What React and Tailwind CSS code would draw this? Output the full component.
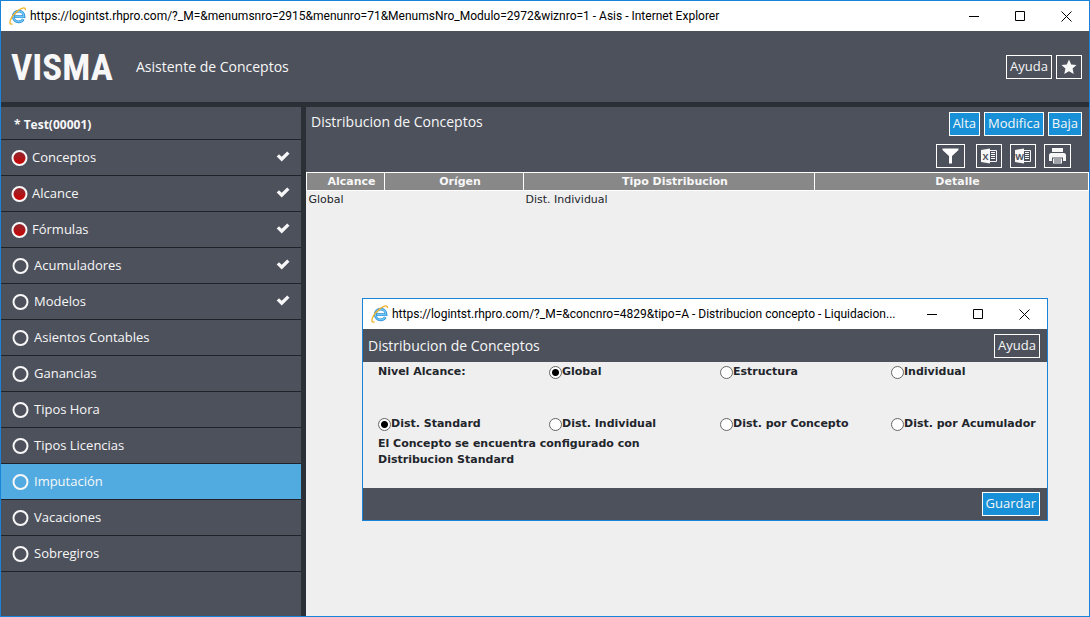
const steps = [
  { name: 'Conceptos', required: true, done: true },
  { name: 'Alcance', required: true, done: true },
  { name: 'Fórmulas', required: true, done: true },
  { name: 'Acumuladores', done: true },
  { name: 'Modelos', done: true },
  { name: 'Asientos Contables' },
  { name: 'Ganancias' },
  { name: 'Tipos Hora' },
  { name: 'Tipos Licencias' },
  { name: 'Imputación', active: true },
  { name: 'Vacaciones' },
  { name: 'Sobregiros' },
];

const niveles = ['Global', 'Estructura', 'Individual'];
const distribuciones = [
  'Dist. Standard',
  'Dist. Individual',
  'Dist. por Concepto',
  'Dist. por Acumulador',
];

const ExplorerIcon = () => (
  <svg width="18" height="18" viewBox="0 0 18 18" fill="none" className="shrink-0">
    <path
      d="M14.300 12.200c-.9 1.700-2.500 2.700-4.600 2.700-3.100 0-5.400-2.300-5.400-5.400s2.300-5.400 5.400-5.400 5.300 2.200 5.300 5.600H5"
      stroke="#2a8ad4"
      strokeWidth="2.800"
    />
    <path
      d="M14 12.200c-.9 1.700-2.400 2.500-4.300 2.500-3 0-5.200-2.200-5.200-5.200s2.200-5.200 5.200-5.200 5.100 2.100 5.100 5.400H6"
      stroke="#6fc8f5"
      strokeWidth="1.400"
    />
    <path
      d="M3.500 16.800c-1.700.6-2.700.1-2.500-1.800C1.400 10.500 7.600 3.400 12.800 1.400c2.600-1 4-.4 3.500 1.800"
      stroke="#f2b32c"
      strokeWidth="1.300"
    />
  </svg>
);

const CheckIcon = () => (
  <svg width="14" height="11" viewBox="0 0 14 11" className="mb-0.5">
    <path d="m3 3.200 2.700 2.600L11.200.5 13.500 2.700 5.700 10.500.7 5.500z" fill="#f7f7f7" />
  </svg>
);

const StarIcon = () => (
  <svg width="16" height="16" viewBox="0 0 16 16">
    <path
      d="m8 .5 2.200 4.900 5.300.6-3.900 3.600 1.100 5.400L8 12.300 3.300 15l1.100-5.400L.5 6l5.300-.6z"
      fill="#f7f7f7"
    />
  </svg>
);

const FilterIcon = () => (
  <svg width="21" height="16" viewBox="0 0 21 16">
    <path d="M2.500.5h16v1.500L12 8v7.500H9V8L2.500 2z" fill="#fff" />
  </svg>
);

const PrintIcon = () => (
  <svg width="19" height="16" viewBox="0 0 19 16">
    <path d="M4 0h11v4H4z" fill="#f7f7f7" />
    <path d="M3 5h13c1 0 2 1 2 2v6h-3V9.500H4V13H1V7c0-1 1-2 2-2z" fill="#f7f7f7" />
    <path d="M5 10.500h9v5H5z" fill="#f7f7f7" />
    <path d="M6 12h7M6 14h7" stroke="#4d515c" />
  </svg>
);

const OfficeIcon = ({ letter }) => (
  <svg width="18" height="16" viewBox="0 0 18 16">
    <path d="M1 2 10 .5v15L1 14z" fill="#f7f7f7" />
    <path d="M10 2.500h6.500v11H10" fill="none" stroke="#f7f7f7" />
    <path d="M11 4.500h4M11 6.500h4M11 8.500h4M11 10.500h4" stroke="#f7f7f7" />
    <text
      x="5.500"
      y="11.500"
      textAnchor="middle"
      fill="#4d515c"
      className="font-['Open_Sans',sans-serif] text-[9px] font-bold"
    >
      {letter}
    </text>
  </svg>
);

const WindowBar = ({ title }) => (
  <div className="flex h-[30px] items-center bg-white pl-2 text-black">
    <ExplorerIcon />
    <span className="ml-[3px] min-w-0 flex-1 font-['Roboto',sans-serif] text-xs whitespace-nowrap">
      {title}
    </span>
    <div className="flex">
      <button aria-label="Minimizar" className="flex h-7 w-[46px] items-center justify-center">
        <svg width="11" height="11" stroke="#000"><path d="M0 5.500h10" /></svg>
      </button>
      <button aria-label="Maximizar" className="flex h-7 w-[46px] items-center justify-center">
        <svg width="11" height="11" fill="none" stroke="#000"><path d="M.5.5h9v9h-9z" /></svg>
      </button>
      <button aria-label="Cerrar" className="flex h-7 w-[46px] items-center justify-center">
        <svg width="11" height="11" stroke="#000"><path d="m.5.5 10 10M10.500.5l-10 10" /></svg>
      </button>
    </div>
  </div>
);

const OutlineButton = ({ children, ...props }) => (
  <button
    className="flex h-6 min-w-[26px] items-center justify-center border border-white px-[3px] text-[13px]"
    {...props}
  >
    {children}
  </button>
);

const BlueButton = ({ children }) => (
  <button className="flex h-6 items-center border border-white bg-[#1890d7] px-[3px] text-[13px]">
    {children}
  </button>
);

const StepMark = ({ required }) => (
  <svg width="17" height="16" viewBox="0 0 17 16">
    <defs>
      <linearGradient id="mark" x2="0" y2="1">
        <stop offset="0" stopColor="#8a2b32" />
        <stop offset="1" stopColor="#d00000" />
      </linearGradient>
    </defs>
    <circle
      cx="8.500"
      cy="8"
      r="7"
      fill={required ? 'url(#mark)' : 'none'}
      stroke="#f7f7f7"
      strokeWidth="2"
    />
  </svg>
);

const Step = ({ step }) => (
  <li className={`border-b border-[#202327] ${step.active ? 'bg-[#51abe0]' : ''}`}>
    <a
      href="#"
      className={`flex h-[35px] items-center pr-[11px] ${step.required ? 'gap-1 pl-[10px]' : 'gap-[5px] pl-[11px]'}`}
    >
      <StepMark required={step.required} />
      <span className="flex-1">{step.name}</span>
      {step.done && <CheckIcon />}
    </a>
  </li>
);

const Option = ({ group, label, checked }) => (
  <label className="flex items-center">
    <input
      type="radio"
      name={group}
      defaultChecked={checked}
      className="size-[13px] shrink-0 appearance-none rounded-full border border-[#666] bg-white checked:bg-[radial-gradient(circle,#000_3px,#fff_4px)]"
    />
    <span className="whitespace-nowrap">{label}</span>
  </label>
);

const DistribucionDialog = () => (
  <div
    role="dialog"
    aria-label="Distribucion de Conceptos"
    className="absolute top-[297px] left-[361px] w-[686px] border border-[#1883d7] bg-[#efefef]"
  >
    <WindowBar title="https://logintst.rhpro.com/?_M=&concnro=4829&tipo=A - Distribucion concepto - Liquidacion..." />
    <div className="flex h-[33px] items-center justify-between bg-[#4d515c] pr-[7px] pl-[5px] text-[#f7f7f7]">
      <h2 className="text-sm">Distribucion de Conceptos</h2>
      <OutlineButton>Ayuda</OutlineButton>
    </div>
    <form className="h-[126px] pt-[2px] font-['DejaVu_Sans',sans-serif] text-[11px] leading-4 font-bold text-[#22252b]">
      <div className="grid grid-cols-4 *:pl-[15px]">
        <span>Nivel Alcance:</span>
        {niveles.map((n) => (
          <Option key={n} group="nivel" label={n} checked={n === 'Global'} />
        ))}
      </div>
      <div className="mt-9 grid grid-cols-4 gap-y-1 *:pl-[15px]">
        {distribuciones.map((d) => (
          <Option key={d} group="distribucion" label={d} checked={d === 'Dist. Standard'} />
        ))}
        <p className="col-span-2 pr-8">
          El Concepto se encuentra configurado con Distribucion Standard
        </p>
      </div>
    </form>
    <div className="flex h-8 items-center justify-end bg-[#4d515c] pr-[7px] text-[#f7f7f7]">
      <BlueButton>Guardar</BlueButton>
    </div>
  </div>
);

export default function App() {
  return (
    <div className="relative flex min-h-screen flex-col border border-[#1883d7] bg-[#2b3036] font-['Open_Sans','Noto_Sans',sans-serif] text-[13px] text-[#f7f7f7]">
      <WindowBar title="https://logintst.rhpro.com/?_M=&menumsnro=2915&menunro=71&MenumsNro_Modulo=2972&wiznro=1 - Asis - Internet Explorer" />

      <header className="mb-[5px] flex h-[71px] items-center bg-[#4d515c] pr-[7px] pl-[10px]">
        <div className="w-[125px] pt-0.5 font-['Roboto_Condensed','Roboto',sans-serif] text-[37px] leading-none font-bold">
          VISMA
        </div>
        <h1 className="flex-1 text-sm">Asistente de Conceptos</h1>
        <div className="flex gap-1">
          <OutlineButton>Ayuda</OutlineButton>
          <OutlineButton aria-label="Favorito">
            <StarIcon />
          </OutlineButton>
        </div>
      </header>

      <div className="flex flex-1 gap-[5px]">
        <nav className="w-[300px] shrink-0 bg-[#4d515c]">
          <p className="flex h-[33px] items-center border-b border-[#202327] pt-1 pl-[13px] text-xs font-bold">
            * Test(00001)
          </p>
          <ul>
            {steps.map((s) => (
              <Step key={s.name} step={s} />
            ))}
          </ul>
        </nav>

        <main className="flex-1 bg-[#efefef]">
          <div className="flex h-[65px] justify-between bg-[#4d515c] pt-[5px] pr-[7px] pl-[5px]">
            <h2 className="text-sm">Distribucion de Conceptos</h2>
            <div className="flex flex-col items-end gap-2">
              <div className="flex gap-1">
                <BlueButton>Alta</BlueButton>
                <BlueButton>Modifica</BlueButton>
                <BlueButton>Baja</BlueButton>
              </div>
              <div className="flex gap-[11px] pr-[11px]">
                <OutlineButton aria-label="Filtrar">
                  <FilterIcon />
                </OutlineButton>
                <div className="flex gap-2">
                  <OutlineButton aria-label="Excel">
                    <OfficeIcon letter="X" />
                  </OutlineButton>
                  <OutlineButton aria-label="Word">
                    <OfficeIcon letter="W" />
                  </OutlineButton>
                  <OutlineButton aria-label="Imprimir">
                    <PrintIcon />
                  </OutlineButton>
                </div>
              </div>
            </div>
          </div>
          <table className="w-full table-fixed border-collapse font-['DejaVu_Sans',sans-serif] text-[11px]">
            <thead>
              <tr className="h-[18px] bg-[#888] leading-4">
                <th className="w-[78px] border border-white pl-3">Alcance</th>
                <th className="w-[139px] border border-white pl-3">Orígen</th>
                <th className="w-[291px] border border-white pl-3">Tipo Distribucion</th>
                <th className="border border-white pl-3">Detalle</th>
              </tr>
            </thead>
            <tbody className="leading-4 text-[#22252b]">
              <tr>
                <td className="pt-px pl-[2px]">Global</td>
                <td />
                <td className="pt-px pl-[2px]">Dist. Individual</td>
                <td />
              </tr>
            </tbody>
          </table>
        </main>
      </div>

      <DistribucionDialog />
    </div>
  );
}
